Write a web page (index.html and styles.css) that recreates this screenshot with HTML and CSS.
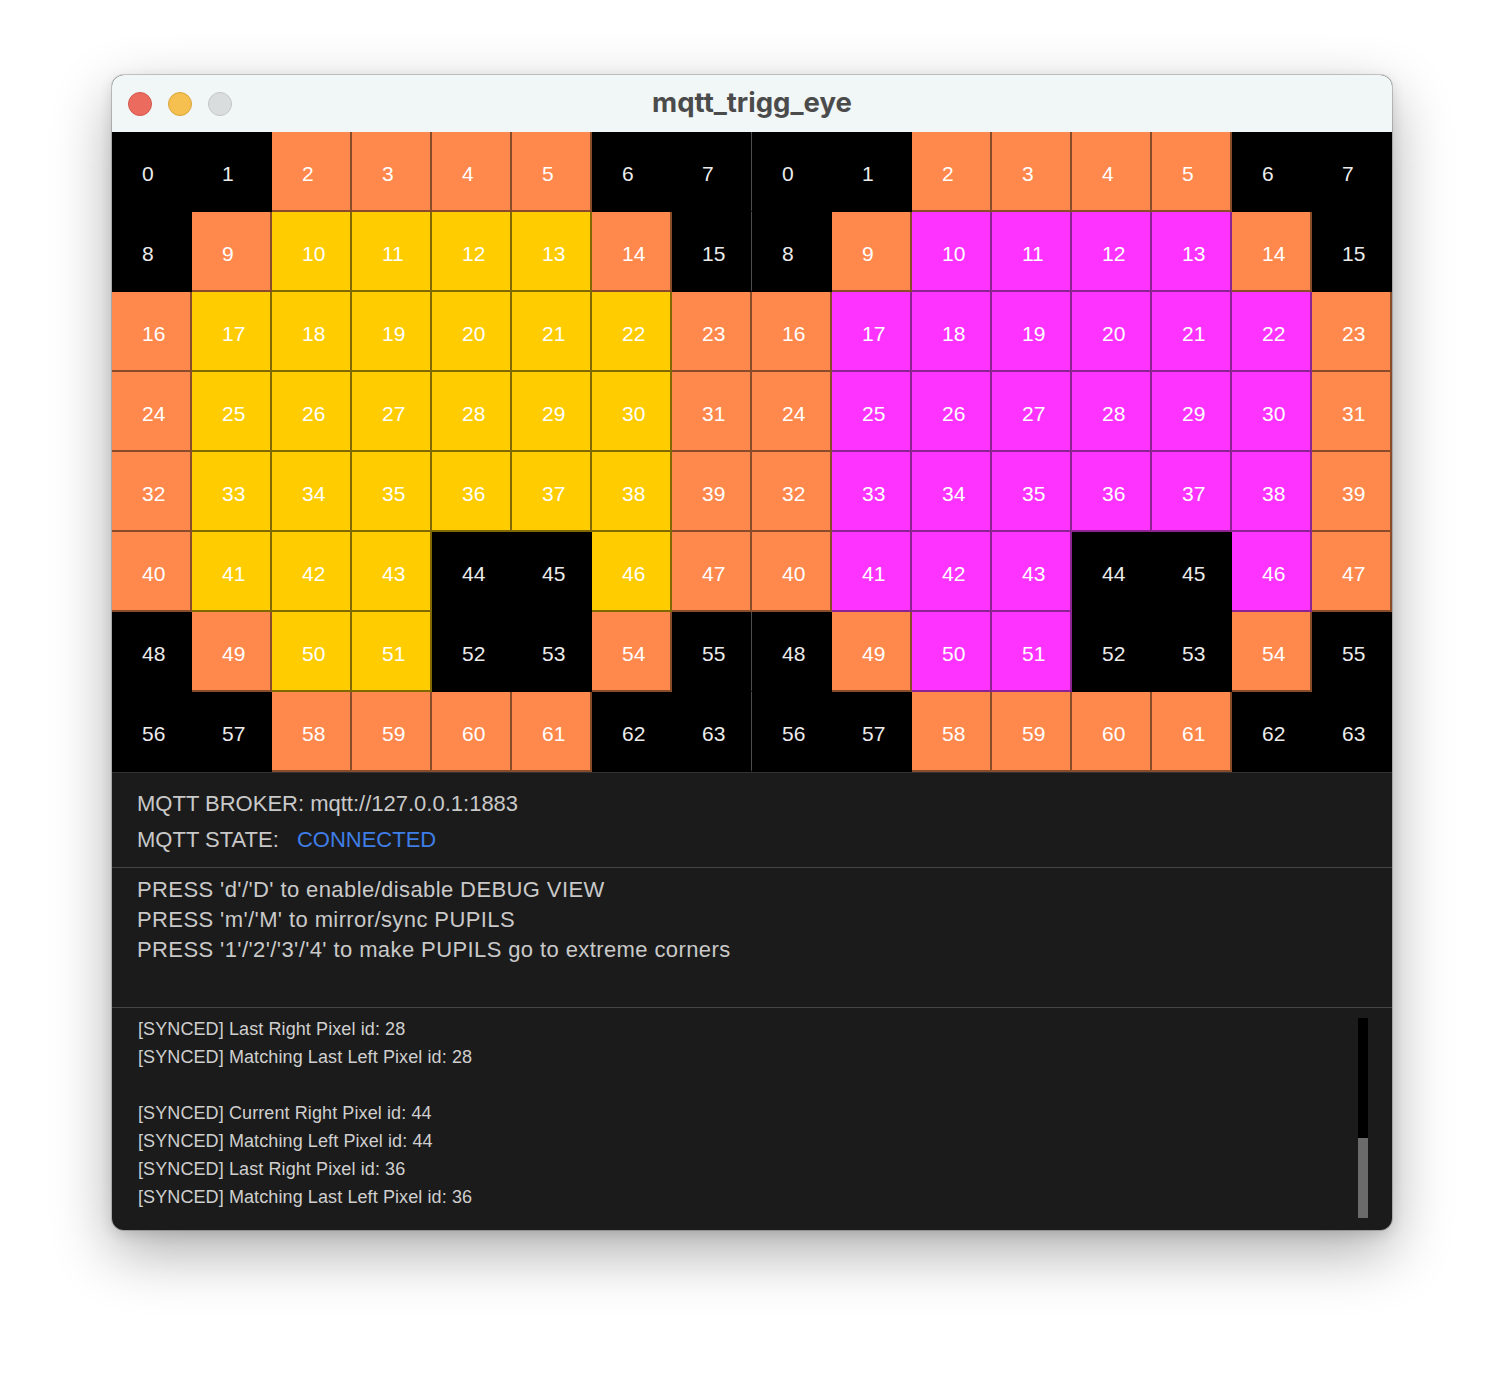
FILE: index.html
```html
<!DOCTYPE html>
<html>
<head>
<meta charset="utf-8">
<title>mqtt_trigg_eye</title>
<link rel="stylesheet" href="styles.css">
</head>
<body>
<div class="window">
  <div class="titlebar">
    <div class="lights">
      <span class="light red"></span>
      <span class="light yellow"></span>
      <span class="light gray"></span>
    </div>
    <div class="title">mqtt_trigg_eye</div>
    <div class="spacer"></div>
  </div>

  <div class="eyes">
    <div class="eye">
      <div class="c b">0</div><div class="c b">1</div><div class="c o">2</div><div class="c o">3</div><div class="c o">4</div><div class="c o">5</div><div class="c b">6</div><div class="c b edge">7</div>
      <div class="c b">8</div><div class="c o">9</div><div class="c y">10</div><div class="c y">11</div><div class="c y">12</div><div class="c y">13</div><div class="c o">14</div><div class="c b edge">15</div>
      <div class="c o">16</div><div class="c y">17</div><div class="c y">18</div><div class="c y">19</div><div class="c y">20</div><div class="c y">21</div><div class="c y">22</div><div class="c o">23</div>
      <div class="c o">24</div><div class="c y">25</div><div class="c y">26</div><div class="c y">27</div><div class="c y">28</div><div class="c y">29</div><div class="c y">30</div><div class="c o">31</div>
      <div class="c o">32</div><div class="c y">33</div><div class="c y">34</div><div class="c y">35</div><div class="c y">36</div><div class="c y">37</div><div class="c y">38</div><div class="c o">39</div>
      <div class="c o">40</div><div class="c y">41</div><div class="c y">42</div><div class="c y">43</div><div class="c b">44</div><div class="c b">45</div><div class="c y">46</div><div class="c o">47</div>
      <div class="c b">48</div><div class="c o">49</div><div class="c y">50</div><div class="c y">51</div><div class="c b">52</div><div class="c b">53</div><div class="c o">54</div><div class="c b edge">55</div>
      <div class="c b">56</div><div class="c b">57</div><div class="c o">58</div><div class="c o">59</div><div class="c o">60</div><div class="c o">61</div><div class="c b">62</div><div class="c b edge">63</div>
    </div>
    <div class="eye">
      <div class="c b">0</div><div class="c b">1</div><div class="c o">2</div><div class="c o">3</div><div class="c o">4</div><div class="c o">5</div><div class="c b">6</div><div class="c b">7</div>
      <div class="c b">8</div><div class="c o">9</div><div class="c m">10</div><div class="c m">11</div><div class="c m">12</div><div class="c m">13</div><div class="c o">14</div><div class="c b">15</div>
      <div class="c o">16</div><div class="c m">17</div><div class="c m">18</div><div class="c m">19</div><div class="c m">20</div><div class="c m">21</div><div class="c m">22</div><div class="c o">23</div>
      <div class="c o">24</div><div class="c m">25</div><div class="c m">26</div><div class="c m">27</div><div class="c m">28</div><div class="c m">29</div><div class="c m">30</div><div class="c o">31</div>
      <div class="c o">32</div><div class="c m">33</div><div class="c m">34</div><div class="c m">35</div><div class="c m">36</div><div class="c m">37</div><div class="c m">38</div><div class="c o">39</div>
      <div class="c o">40</div><div class="c m">41</div><div class="c m">42</div><div class="c m">43</div><div class="c b">44</div><div class="c b">45</div><div class="c m">46</div><div class="c o">47</div>
      <div class="c b">48</div><div class="c o">49</div><div class="c m">50</div><div class="c m">51</div><div class="c b">52</div><div class="c b">53</div><div class="c o">54</div><div class="c b">55</div>
      <div class="c b">56</div><div class="c b">57</div><div class="c o">58</div><div class="c o">59</div><div class="c o">60</div><div class="c o">61</div><div class="c b">62</div><div class="c b">63</div>
    </div>
  </div>

  <div class="panel status">
    <div class="line">MQTT BROKER: mqtt://127.0.0.1:1883</div>
    <div class="line">MQTT STATE: <span class="connected">CONNECTED</span></div>
  </div>

  <div class="panel help">
    <div class="hline">PRESS 'd'/'D' to enable/disable DEBUG VIEW</div>
    <div class="hline">PRESS 'm'/'M' to mirror/sync PUPILS</div>
    <div class="hline">PRESS '1'/'2'/'3'/'4' to make PUPILS go to extreme corners</div>
  </div>

  <div class="panel logpanel">
    <div class="log">
      <div class="lline">[SYNCED] Last Right Pixel id: 28</div>
      <div class="lline">[SYNCED] Matching Last Left Pixel id: 28</div>
      <div class="lline blank"></div>
      <div class="lline">[SYNCED] Current Right Pixel id: 44</div>
      <div class="lline">[SYNCED] Matching Left Pixel id: 44</div>
      <div class="lline">[SYNCED] Last Right Pixel id: 36</div>
      <div class="lline">[SYNCED] Matching Last Left Pixel id: 36</div>
    </div>
    <div class="scrollbar"><div class="thumb"></div></div>
  </div>
</div>
</body>
</html>
```

FILE: styles.css
```css
html, body {
  margin: 0;
  padding: 0;
  background: #ffffff;
}

body {
  padding: 75px 0 0 112px;
  height: 1380px;
  box-sizing: border-box;
}

.window {
  width: 1280px;
  border-radius: 12px;
  overflow: hidden;
  background: #1b1b1b;
  box-shadow: 0 0 0 1px rgba(0, 0, 0, 0.18), 0 22px 60px rgba(0, 0, 0, 0.32), 0 4px 14px rgba(0, 0, 0, 0.12);
}

.titlebar {
  height: 57px;
  background: #f1f6f7;
  display: grid;
  grid-template-columns: 1fr auto 1fr;
  align-items: center;
}

.lights {
  display: flex;
  gap: 16px;
  padding-left: 16px;
}

.light {
  width: 24px;
  height: 24px;
  border-radius: 50%;
  box-sizing: border-box;
}

.light.red {
  background: #ec6b5f;
  border: 1px solid #d3574c;
}

.light.yellow {
  background: #f5c050;
  border: 1px solid #dba63c;
}

.light.gray {
  background: #dadddd;
  border: 1px solid #c4c7c7;
}

.title {
  font-family: Inter, "Liberation Sans", sans-serif;
  font-weight: 700;
  font-size: 27.5px;
  color: #4b4b4b;
  margin-top: -3px;
}

.eyes {
  display: flex;
  background: #000;
}

.eye {
  display: grid;
  grid-template-columns: repeat(8, 80px);
  grid-auto-rows: 80px;
}

.c {
  box-sizing: border-box;
  border-right: 2px solid #000;
  border-bottom: 2px solid #000;
  display: flex;
  align-items: center;
  padding-left: 30px;
  padding-top: 6px;
  font-family: "Liberation Sans", Arial, sans-serif;
  font-size: 21px;
  color: #ffffff;
}

.c.b {
  background: #000;
  color: #ececec;
}

.c.b.edge {
  border-right: 1px solid #4e4e4e;
}

.c.o {
  background: #ff884d;
  border-color: #8a4b2a;
}

.c.y {
  background: #ffcc00;
  border-color: #806900;
}

.c.m {
  background: #ff33ff;
  border-color: #8c2391;
}

.panel {
  border-top: 1px solid #454545;
  color: #c9c9c9;
  font-family: "Liberation Sans", Arial, sans-serif;
}

.status {
  border-top-color: #333;
  padding: 13px 0 9px 25px;
  font-size: 22px;
}

.status .line {
  height: 36px;
  line-height: 36px;
}

.connected {
  color: #3f7ee6;
  margin-left: 12px;
}

.help {
  padding: 7px 0 42px 25px;
  font-size: 22px;
  letter-spacing: 0.4px;
}

.hline {
  height: 30px;
  line-height: 30px;
}

.logpanel {
  display: flex;
  align-items: flex-start;
  padding: 7px 24px 12px 26px;
}

.log {
  flex: 1;
  font-size: 18px;
  color: #cfcfcf;
  letter-spacing: 0.1px;
}

.lline {
  height: 28px;
  line-height: 28px;
}

.scrollbar {
  width: 10px;
  height: 200px;
  margin-top: 3px;
  background: #000;
  display: flex;
  flex-direction: column;
  justify-content: flex-end;
}

.thumb {
  height: 80px;
  background: #6b6b6b;
}
```
